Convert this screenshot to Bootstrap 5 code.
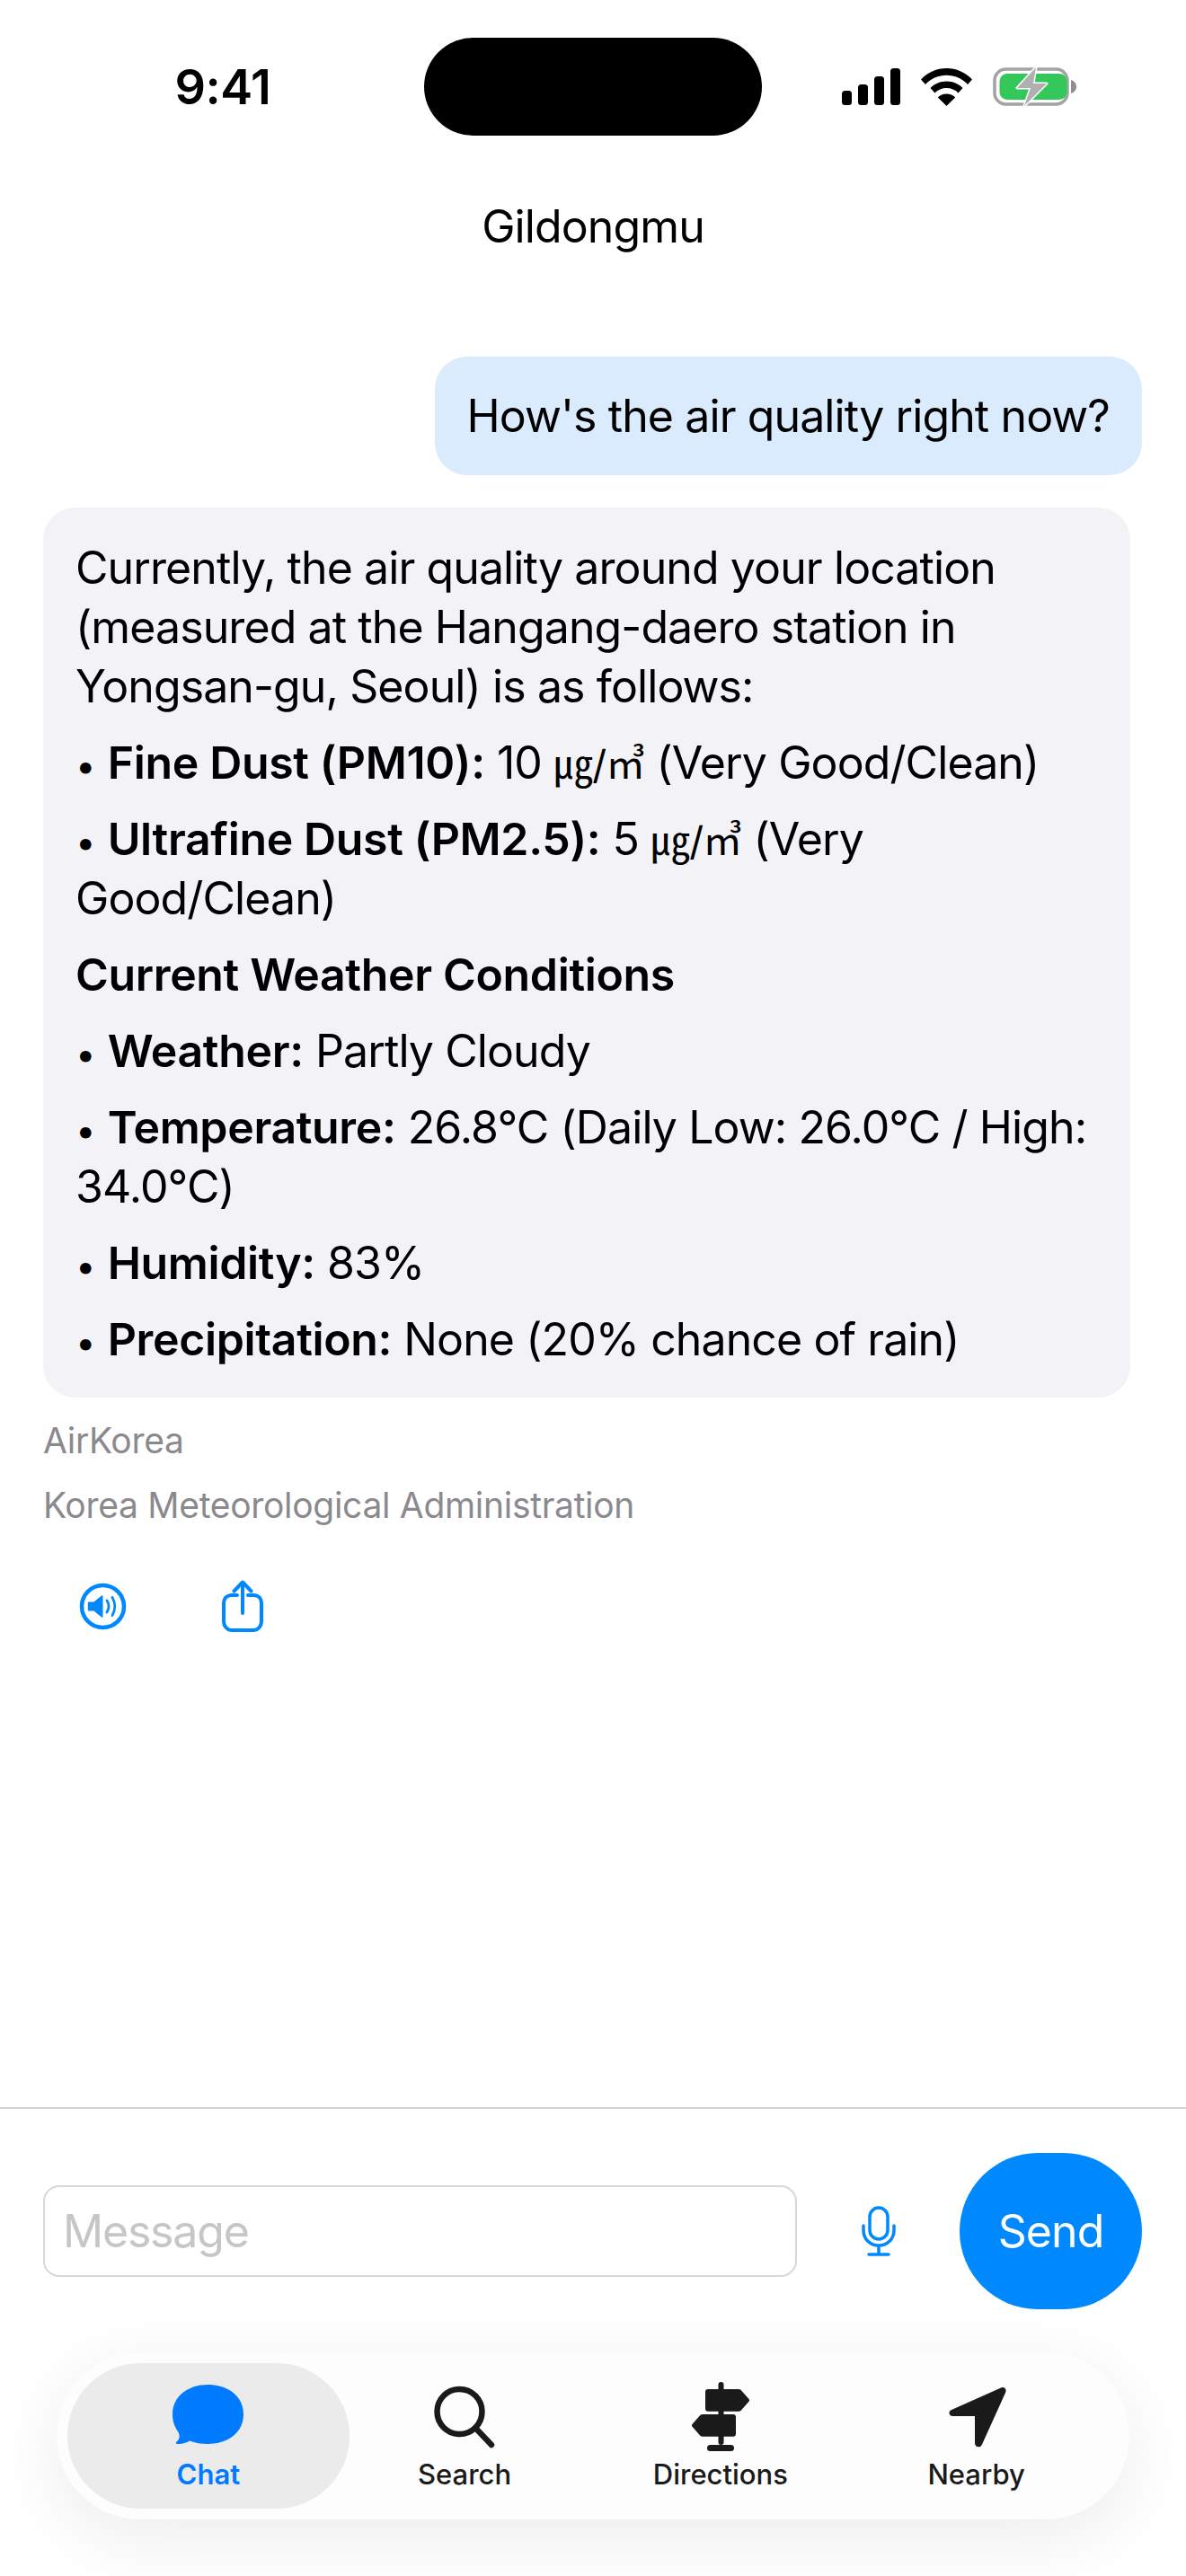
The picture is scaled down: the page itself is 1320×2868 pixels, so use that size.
<!DOCTYPE html>
<html lang="en">
<head>
    <meta charset="UTF-8">
    <meta name="viewport" content="width=device-width, initial-scale=1">
    <title>Gildongmu</title>
    <link href="https://cdn.jsdelivr.net/npm/bootstrap@5.3.0/dist/css/bootstrap.min.css" rel="stylesheet">
    <style>
        html, body { margin: 0; }
        body {
            width: 1320px;
            height: 2868px;
            overflow: hidden;
            color: #000;
            background: #fff;
            font-family: Inter, "Noto Sans CJK KR", sans-serif;
            font-size: 50px;
            line-height: 66px;
            letter-spacing: -0.9px;
        }
        .phone { height: 2868px; }
        .status-row { height: 151px; padding: 42px 66px 0 194px; }
        .clock { width: 108px; font-size: 54px; font-weight: 600; line-height: 110px; letter-spacing: -0.5px; text-align: center; }
        .island { width: 376px; height: 109px; border-radius: 55px; background: #000; margin-left: 170px; margin-right: 89px; }
        .status-icons { height: 109px; gap: 23px; }
        .title-row { height: 202px; line-height: 202px; }
        .chat-area { padding-top: 44px; }
        .bubble-user { margin-right: 49px; padding: 33px 36px; background: #d9ebfd; border-radius: 36px; }
        .bubble-bot { width: 1210px; margin: 36px 0 0 48px; padding: 34px 36px 32px; background: #f2f2f7; border-radius: 36px; }
        .bubble-bot p { margin: 0 0 19px; }
        .bubble-bot p:last-child { margin-bottom: 0; }
        .bubble-bot b { font-weight: 600; letter-spacing: -0.35px; }
        .dot { font-size: 40px; line-height: 1; letter-spacing: 0; }
        .unit { font-size: 44px; line-height: 1; }
        .sources { margin: 12px 0 0 48px; font-size: 39px; line-height: 72px; letter-spacing: -0.3px; color: #8a8a8e; }
        .actions { margin: 47px 0 0 88px; gap: 106px; }
        .composer { border-top: 2px solid #d2d2d4; padding: 49px 49px 48px 48px; }
        .msg-input.form-control {
            width: 840px; height: 102px; padding: 0 20px;
            font-size: 50px; line-height: 66px; letter-spacing: -1.2px;
            border: 2px solid #d8d8da; border-radius: 18px; color: #000;
        }
        .msg-input.form-control::placeholder { color: #c6c6c8; opacity: 1; }
        .mic-slot { width: 181px; }
        .send-btn.btn {
            width: 203px; height: 174px; padding: 0; border: 0; border-radius: 87px;
            background: #0088ff; color: #fff;
            font-size: 50px; line-height: 66px; letter-spacing: -0.9px;
        }
        .tab-wrap { height: 249px; padding: 0 63px; }
        .tab-pill {
            width: 1194px; height: 186px; padding: 12px 28px 12px 26px;
            border-radius: 93px; background: #fdfdfd;
            box-shadow: 0 20px 80px rgba(0, 0, 0, .08);
        }
        .tab-cell {
            width: 285px; height: 162px; padding-top: 20px;
            font-size: 31px; line-height: 36px; letter-spacing: 0; font-weight: 500;
            color: #1a1a1a; text-align: center;
        }
        .tab-cell svg { display: block; height: 78px; margin: 0 auto 8px; }
        .tab-cell.on { width: 314px; margin: 0 -14px; border-radius: 81px; background: #ebebeb; color: #007aff; font-weight: 600; }
    </style>
</head>
<body>
<div class="phone d-flex flex-column">
    <!-- status bar -->
    <div class="status-row d-flex align-items-start">
        <div class="clock">9:41</div>
        <div class="island"></div>
        <div class="status-icons d-flex align-items-center">
            <svg width="65" height="42" viewBox="0 0 65 42"><rect x="0" y="25" width="11" height="16" rx="3.5"/><rect x="18" y="18" width="11" height="23" rx="3.5"/><rect x="36" y="9" width="11" height="32" rx="3.5"/><rect x="54" y="0" width="11" height="41" rx="3.5"/></svg>
            <svg width="57" height="42" viewBox="0 0 57 42"><path d="M28.500 0C17.500 0 8 4.300 0 12.500l5 5.500C11.500 11.300 19.500 7.800 28.500 7.800S45.500 11.300 52 18l5-5.500C49 4.300 39.500 0 28.500 0z"/><path d="M28.500 14.500c-7 0-13.200 2.700-18 7.500l5 5.500c3.500-3.500 8-5.400 13-5.400s9.500 1.900 13 5.400l5-5.500c-4.800-4.800-11-7.500-18-7.500z"/><path d="M28.500 28.500c-3.900 0-7.300 1.500-9.700 3.900L28.500 42l9.700-9.600c-2.400-2.400-5.800-3.900-9.700-3.900z"/></svg>
            <svg width="93" height="45" viewBox="0 0 93 45">
                <rect x="2" y="3" width="81" height="39" rx="12.500" fill="none" stroke="#a3a3a3" stroke-width="3.500"/>
                <rect x="7.500" y="8" width="75" height="29" rx="8.500" fill="#34c759"/>
                <path d="M87 15v15c3.500-1 6-4 6-7.500S90.500 16 87 15z" fill="#8e8e8e"/>
                <path d="M48 1L27 24h15l-7 20 25-25H45z" fill="#b0b0b0" stroke="#fff" stroke-width="3" stroke-linejoin="round" paint-order="stroke"/>
            </svg>
        </div>
    </div>

    <div class="title-row text-center">Gildongmu</div>

    <!-- chat -->
    <div class="chat-area flex-grow-1">
        <div class="d-flex justify-content-end">
            <div class="bubble-user">How's the air quality right now?</div>
        </div>
        <div class="bubble-bot">
            <p>Currently, the air quality around your location (measured at the Hangang-daero station in Yongsan-gu, Seoul) is as follows:</p>
            <p><span class="dot">•</span> <b>Fine Dust (PM10):</b> 10 <span class="unit">㎍/㎥</span> (Very Good/Clean)</p>
            <p><span class="dot">•</span> <b>Ultrafine Dust (PM2.5):</b> 5 <span class="unit">㎍/㎥</span> (Very Good/Clean)</p>
            <p><b>Current Weather Conditions</b></p>
            <p><span class="dot">•</span> <b>Weather:</b> Partly Cloudy</p>
            <p><span class="dot">•</span> <b>Temperature:</b> 26.8°C (Daily Low: 26.0°C / High: 34.0°C)</p>
            <p><span class="dot">•</span> <b>Humidity:</b> 83%</p>
            <p><span class="dot">•</span> <b>Precipitation:</b> None (20% chance of rain)</p>
        </div>
        <div class="sources">
            <div>AirKorea</div>
            <div>Korea Meteorological Administration</div>
        </div>
        <div class="actions d-flex align-items-center">
            <svg width="53" height="53" viewBox="0 0 53 53"><circle cx="26.500" cy="26.500" r="23.500" fill="none" stroke="#0088ff" stroke-width="4.500"/><path d="M11 21.500h5.500L25 14.500c.8-.6 1.500-.3 1.500.8v22.400c0 1.100-.7 1.400-1.500.8l-8.500-7H11c-.8 0-1.200-.4-1.200-1.200v-7.600c0-.8.400-1.200 1.200-1.200z" fill="#0088ff"/><path d="M31 20c2.500 4 2.500 9 0 13M37 16.500c3.700 6 3.700 14 0 20" fill="none" stroke="#0088ff" stroke-width="2.800" stroke-linecap="round"/></svg>
            <svg width="46" height="58" viewBox="0 0 46 58"><path d="M17 17h-6C5.500 17 2 20.500 2 26v20c0 5.500 3.500 10 9 10h24c5.500 0 9-4.500 9-10V26c0-5.500-3.500-9-9-9h-6" fill="none" stroke="#0088ff" stroke-width="4" stroke-linecap="round"/><path d="M23 37V3M13.500 12.500L23 2.500l9.500 10" fill="none" stroke="#0088ff" stroke-width="4" stroke-linecap="round" stroke-linejoin="round"/></svg>
        </div>
    </div>

    <!-- composer -->
    <div class="composer d-flex align-items-center position-relative">
        <input type="text" class="form-control msg-input" placeholder="Message">
        <div class="mic-slot d-flex justify-content-center">
            <svg width="38" height="56" viewBox="0 0 38 56" fill="none" stroke="#0088ff" stroke-width="3.500" stroke-linecap="round"><rect x="9" y="2" width="20" height="35" rx="10"/><path d="M2 22v5c0 10 7.500 17 17 17s17-7 17-17v-5M19 44v9M8 54h22"/></svg>
        </div>
        <button type="button" class="btn send-btn">Send</button>
    </div>

    <!-- tab bar -->
    <div class="tab-wrap">
        <div class="tab-pill d-flex">
            <div class="tab-cell on">
                <svg width="80" height="78" viewBox="0 -4 80 78"><path d="M39.500 0C62 0 79 13 79 33C79 53 62 66 39.500 66C32 66 25 65 19 62.500C15 65 10 66.500 5 66C3.500 65.500 3.500 64.500 4.500 63.500C8 60.500 8.500 57 6.500 53C2.500 47 0 41 0 33C0 13 17 0 39.500 0z" fill="#007aff"/></svg>
                Chat
            </div>
            <div class="tab-cell">
                <svg width="70" height="78" viewBox="0 -1 70 78" fill="none" stroke="#1a1a1a" stroke-width="6.500" stroke-linecap="round"><circle cx="29.500" cy="33" r="25"/><path d="M47 51l18 19"/></svg>
                Search
            </div>
            <div class="tab-cell">
                <svg width="66" height="78" viewBox="0 0 66 78" fill="#1a1a1a"><rect x="30.500" y="1" width="6" height="70" rx="3"/><path d="M19 9h34c1 0 2 .4 2.700 1.100L64.500 20c.7.800.7 2 0 2.800l-8.800 9.900c-.7.700-1.700 1.100-2.700 1.100H19c-2 0-3-1-3-3V12c0-2 1-3 3-3z"/><path d="M47 37H13c-1 0-2 .4-2.700 1.100L1.500 48c-.7.800-.7 2 0 2.800l8.800 9.900c.7.700 1.700 1.100 2.700 1.100h34c2 0 3-1 3-3V40c0-2-1-3-3-3z"/><rect x="18" y="71" width="30" height="7" rx="3.500"/></svg>
                Directions
            </div>
            <div class="tab-cell">
                <svg width="66" height="78" viewBox="0 0 66 78" fill="#1a1a1a"><path d="M60 7.500L5 32c-4 1.800-3 7 1.500 7H31v30c0 5 6.200 6 8 1.500L65 13c1.800-4-1-7.300-5-5.500z"/></svg>
                Nearby
            </div>
        </div>
    </div>
</div>
</body>
</html>
